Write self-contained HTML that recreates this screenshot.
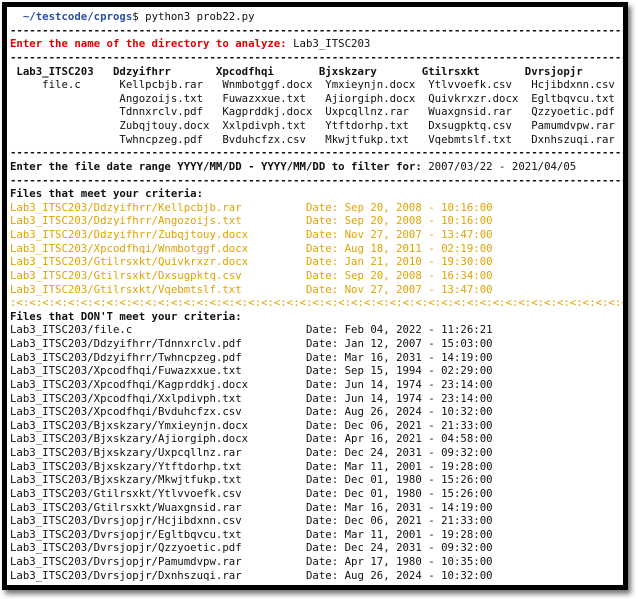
<!DOCTYPE html>
<html><head><meta charset="utf-8"><style>
body{margin:0;width:638px;height:599px;background:#fff;overflow:hidden;position:relative}
.frame{position:absolute;left:2px;top:2px;width:616px;height:578px;border:5px solid #000;background:#fff;box-shadow:3px 4px 5px rgba(0,0,0,.55);overflow:hidden}
pre{margin:0;position:absolute;left:3px;top:3px;font-family:"DejaVu Sans Mono","Liberation Mono",monospace;font-size:10.7px;line-height:13.62px;color:#111;white-space:pre}
b{font-weight:bold}
.bl{color:#2a4fa8;font-weight:bold}
.r{color:#e00000;font-weight:bold}
.y{color:#e0a300}
</style></head><body><div class="frame"><pre>  <span class="bl">~/testcode/cprogs</span>$ python3 prob22.py
<b>------------------------------------------------------------------------------------------------------</b>
<span class="r">Enter the name of the directory to analyze:</span> Lab3_ITSC203
<b>------------------------------------------------------------------------------------------------------</b>
<b> Lab3_ITSC203   Ddzyifhrr       Xpcodfhqi       Bjxskzary       Gtilrsxkt       Dvrsjopjr</b>
     file.c      Kellpcbjb.rar   Wnmbotggf.docx  Ymxieynjn.docx  Ytlvvoefk.csv   Hcjibdxnn.csv
                 Angozoijs.txt   Fuwazxxue.txt   Ajiorgiph.docx  Quivkrxzr.docx  Egltbqvcu.txt
                 Tdnnxrclv.pdf   Kagprddkj.docx  Uxpcqllnz.rar   Wuaxgnsid.rar   Qzzyoetic.pdf
                 Zubqjtouy.docx  Xxlpdivph.txt   Ytftdorhp.txt   Dxsugpktq.csv   Pamumdvpw.rar
                 Twhncpzeg.pdf   Bvduhcfzx.csv   Mkwjtfukp.txt   Vqebmtslf.txt   Dxnhszuqi.rar
<b>------------------------------------------------------------------------------------------------------</b>
<b>Enter the file date range YYYY/MM/DD - YYYY/MM/DD to filter for:</b> 2007/03/22 - 2021/04/05
<b>------------------------------------------------------------------------------------------------------</b>
<b>Files that meet your criteria:</b>
<span class="y">Lab3_ITSC203/Ddzyifhrr/Kellpcbjb.rar          Date: Sep 20, 2008 - 10:16:00
Lab3_ITSC203/Ddzyifhrr/Angozoijs.txt          Date: Sep 20, 2008 - 10:16:00
Lab3_ITSC203/Ddzyifhrr/Zubqjtouy.docx         Date: Nov 27, 2007 - 13:47:00
Lab3_ITSC203/Xpcodfhqi/Wnmbotggf.docx         Date: Aug 18, 2011 - 02:19:00
Lab3_ITSC203/Gtilrsxkt/Quivkrxzr.docx         Date: Jan 21, 2010 - 19:30:00
Lab3_ITSC203/Gtilrsxkt/Dxsugpktq.csv          Date: Sep 20, 2008 - 16:34:00
Lab3_ITSC203/Gtilrsxkt/Vqebmtslf.txt          Date: Nov 27, 2007 - 13:47:00
:&lt;:&lt;:&lt;:&lt;:&lt;:&lt;:&lt;:&lt;:&lt;:&lt;:&lt;:&lt;:&lt;:&lt;:&lt;:&lt;:&lt;:&lt;:&lt;:&lt;:&lt;:&lt;:&lt;:&lt;:&lt;:&lt;:&lt;:&lt;:&lt;:&lt;:&lt;:&lt;:&lt;:&lt;:&lt;:&lt;:&lt;:&lt;:&lt;:&lt;:&lt;:&lt;:&lt;:&lt;:&lt;:&lt;:&lt;:&lt;:&lt;:&lt;:&lt;:&lt;</span>
<b>Files that DON'T meet your criteria:</b>
Lab3_ITSC203/file.c                           Date: Feb 04, 2022 - 11:26:21
Lab3_ITSC203/Ddzyifhrr/Tdnnxrclv.pdf          Date: Jan 12, 2007 - 15:03:00
Lab3_ITSC203/Ddzyifhrr/Twhncpzeg.pdf          Date: Mar 16, 2031 - 14:19:00
Lab3_ITSC203/Xpcodfhqi/Fuwazxxue.txt          Date: Sep 15, 1994 - 02:29:00
Lab3_ITSC203/Xpcodfhqi/Kagprddkj.docx         Date: Jun 14, 1974 - 23:14:00
Lab3_ITSC203/Xpcodfhqi/Xxlpdivph.txt          Date: Jun 14, 1974 - 23:14:00
Lab3_ITSC203/Xpcodfhqi/Bvduhcfzx.csv          Date: Aug 26, 2024 - 10:32:00
Lab3_ITSC203/Bjxskzary/Ymxieynjn.docx         Date: Dec 06, 2021 - 21:33:00
Lab3_ITSC203/Bjxskzary/Ajiorgiph.docx         Date: Apr 16, 2021 - 04:58:00
Lab3_ITSC203/Bjxskzary/Uxpcqllnz.rar          Date: Dec 24, 2031 - 09:32:00
Lab3_ITSC203/Bjxskzary/Ytftdorhp.txt          Date: Mar 11, 2001 - 19:28:00
Lab3_ITSC203/Bjxskzary/Mkwjtfukp.txt          Date: Dec 01, 1980 - 15:26:00
Lab3_ITSC203/Gtilrsxkt/Ytlvvoefk.csv          Date: Dec 01, 1980 - 15:26:00
Lab3_ITSC203/Gtilrsxkt/Wuaxgnsid.rar          Date: Mar 16, 2031 - 14:19:00
Lab3_ITSC203/Dvrsjopjr/Hcjibdxnn.csv          Date: Dec 06, 2021 - 21:33:00
Lab3_ITSC203/Dvrsjopjr/Egltbqvcu.txt          Date: Mar 11, 2001 - 19:28:00
Lab3_ITSC203/Dvrsjopjr/Qzzyoetic.pdf          Date: Dec 24, 2031 - 09:32:00
Lab3_ITSC203/Dvrsjopjr/Pamumdvpw.rar          Date: Apr 17, 1980 - 10:35:00
Lab3_ITSC203/Dvrsjopjr/Dxnhszuqi.rar          Date: Aug 26, 2024 - 10:32:00</pre></div></body></html>
